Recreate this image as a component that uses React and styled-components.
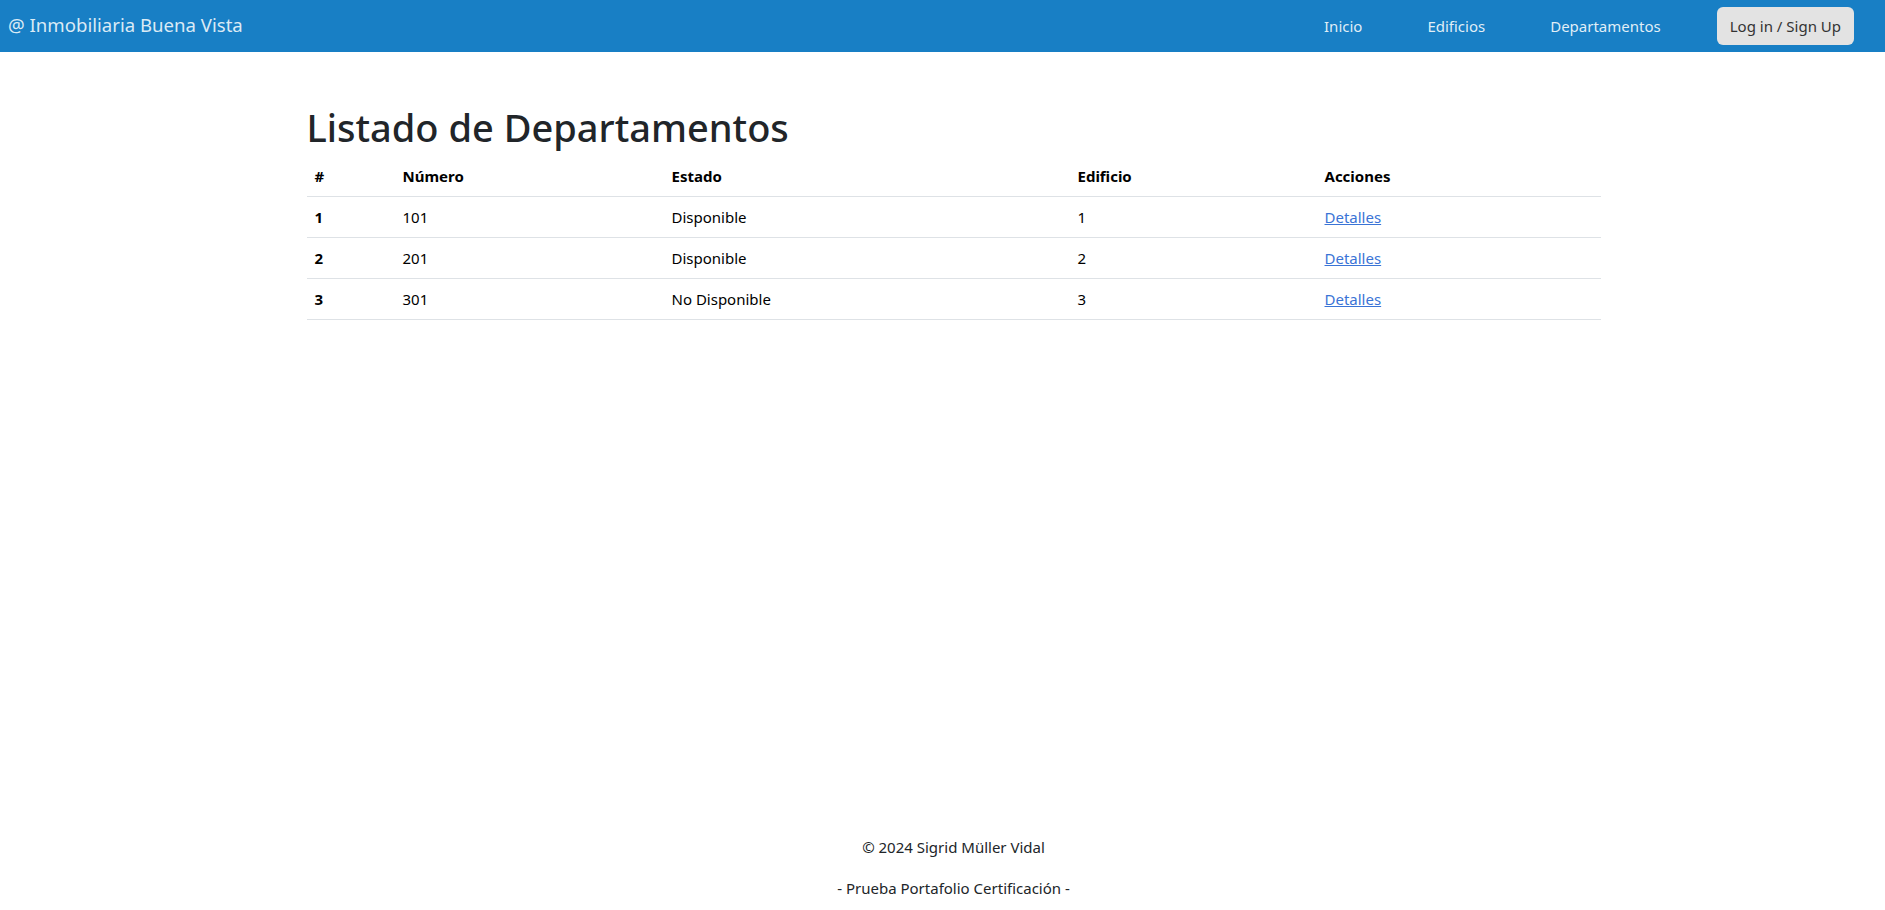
import React from 'react';
import styled, { createGlobalStyle } from 'styled-components';

const GlobalStyle = createGlobalStyle`
  * { box-sizing: border-box; }
  body {
    margin: 0;
    font-family: "Noto Sans", "Open Sans", sans-serif;
    font-size: 16px;
    line-height: 1.5;
    color: #212529;
    background: #fff;
  }
`;

const Page = styled.div`
  min-height: 100vh;
  display: flex;
  flex-direction: column;
`;

const Navbar = styled.nav`
  height: 52px;
  background: #187fc5;
  display: flex;
  align-items: center;
  justify-content: space-between;
  padding: 0 31px 0 8px;
`;

const Brand = styled.a`
  font-size: 18.6px;
  color: rgba(255, 255, 255, 0.85);
  text-decoration: none;
  margin-top: -2px;
`;

const NavList = styled.ul`
  list-style: none;
  margin: 0;
  padding: 0;
  display: flex;
  align-items: center;
  gap: 65px;
`;

const NavLink = styled.a`
  font-size: 15px;
  color: rgba(255, 255, 255, 0.88);
  text-decoration: none;
`;

const LoginButton = styled.button`
  margin-left: -9px;
  height: 38px;
  padding: 0 13px;
  border: none;
  border-radius: 6px;
  background: #e3e3e3;
  color: #333;
  font-family: inherit;
  font-size: 15px;
  cursor: pointer;
`;

const Main = styled.main`
  flex: 1;
  width: 1294px;
  margin-left: calc(50% - 636px);
  padding-top: 53px;
`;

const Title = styled.h1`
  margin: 0 0 5px;
  font-size: 38px;
  font-weight: 500;
  line-height: 1.2;
  color: #212529;
`;

const Table = styled.table`
  width: 100%;
  border-collapse: collapse;
  color: #000;
  font-size: 15px;
`;

const Th = styled.th`
  text-align: left;
  font-weight: 700;
  padding: 8px;
  width: ${p => p.w}px;
  border-bottom: 1px solid #dee2e6;
  line-height: 24px;
`;

const Td = styled.td`
  padding: 8px;
  border-bottom: 1px solid #dee2e6;
  line-height: 24px;
  font-weight: ${p => (p.bold ? 700 : 400)};
`;

const Link = styled.a`
  color: #3a74d6;
  text-decoration: underline;
`;

const Footer = styled.footer`
  width: 1294px;
  margin-left: calc(50% - 636px);
  text-align: center;
  padding-bottom: 10px;
  font-size: 15px;
`;

const FooterLine = styled.p`
  margin: 0;
  line-height: 24px;
  & + & { margin-top: 17px; }
`;

const rows = [
  { id: 1, numero: '101', estado: 'Disponible', edificio: '1' },
  { id: 2, numero: '201', estado: 'Disponible', edificio: '2' },
  { id: 3, numero: '301', estado: 'No Disponible', edificio: '3' },
];

export default function App() {
  return (
    <Page>
      <GlobalStyle />
      <Navbar>
        <Brand href="#">@ Inmobiliaria Buena Vista</Brand>
        <NavList>
          <li><NavLink href="#">Inicio</NavLink></li>
          <li><NavLink href="#">Edificios</NavLink></li>
          <li><NavLink href="#">Departamentos</NavLink></li>
          <li><LoginButton>Log in / Sign Up</LoginButton></li>
        </NavList>
      </Navbar>

      <Main>
        <Title>Listado de Departamentos</Title>
        <Table>
          <thead>
            <tr>
              <Th w={88}>#</Th>
              <Th w={269}>Número</Th>
              <Th w={406}>Estado</Th>
              <Th w={247}>Edificio</Th>
              <Th>Acciones</Th>
            </tr>
          </thead>
          <tbody>
            {rows.map(r => (
              <tr key={r.id}>
                <Td bold>{r.id}</Td>
                <Td>{r.numero}</Td>
                <Td>{r.estado}</Td>
                <Td>{r.edificio}</Td>
                <Td><Link href="#">Detalles</Link></Td>
              </tr>
            ))}
          </tbody>
        </Table>
      </Main>

      <Footer>
        <FooterLine>© 2024 Sigrid Müller Vidal</FooterLine>
        <FooterLine>- Prueba Portafolio Certificación -</FooterLine>
      </Footer>
    </Page>
  );
}
